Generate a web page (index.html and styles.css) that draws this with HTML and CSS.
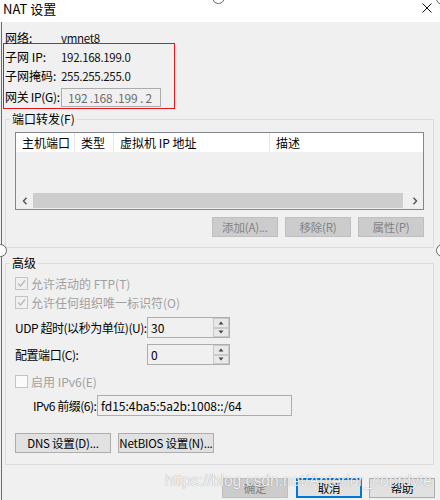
FILE: index.html
```html
<!DOCTYPE html>
<html lang="zh-CN">
<head>
<meta charset="utf-8">
<title>NAT 设置</title>
<link rel="stylesheet" href="styles.css">
</head>
<body>
<div class="window">
  <div class="titlebar">
    <span class="title">NAT 设置</span>
    <svg class="close" viewBox="0 0 10 10" width="10" height="10"><path d="M0.5 0.5 L9.5 9.5 M9.5 0.5 L0.5 9.5" stroke="#111" stroke-width="1" fill="none"/></svg>
  </div>
  <div class="main">
    <div class="info-row net"><span class="lbl">网络:</span><span class="val">vmnet8</span></div>
    <div class="redbox">
      <div class="info-row"><span class="lbl">子网 IP:</span><span class="val">192.168.199.0</span></div>
      <div class="info-row"><span class="lbl">子网掩码:</span><span class="val">255.255.255.0</span></div>
      <div class="info-row gw"><span class="lbl tight">网关 IP(G):</span><span class="ipbox">192 .168 .199 . 2</span></div>
    </div>

    <fieldset class="group pf">
      <legend>端口转发(F)</legend>
      <div class="table">
        <div class="thead">
          <div class="th c1">主机端口</div>
          <div class="th c2">类型</div>
          <div class="th c3">虚拟机 IP 地址</div>
          <div class="th c4">描述</div>
        </div>
        <div class="tbody"></div>
        <div class="hscroll">
          <div class="sbtn"><svg viewBox="0 0 6 8" width="6" height="8"><path d="M4.5 0.8 L1.5 4 L4.5 7.2" stroke="#555" stroke-width="1.4" fill="none"/></svg></div>
          <div class="thumb"></div>
          <div class="sbtn"><svg viewBox="0 0 6 8" width="6" height="8"><path d="M1.5 0.8 L4.5 4 L1.5 7.2" stroke="#555" stroke-width="1.4" fill="none"/></svg></div>
        </div>
      </div>
      <div class="btnrow">
        <div class="btn disabled">添加(A)...</div>
        <div class="btn disabled">移除(R)</div>
        <div class="btn disabled">属性(P)</div>
      </div>
    </fieldset>

    <fieldset class="group adv">
      <legend>高级</legend>
      <div class="cb-row"><span class="cb"><svg viewBox="0 0 11 11" width="11" height="11"><path d="M2 5.5 L4.5 8 L9 2.5" stroke="#b8b8b8" stroke-width="1.3" fill="none"/></svg></span>允许活动的 FTP(T)</div>
      <div class="cb-row"><span class="cb"><svg viewBox="0 0 11 11" width="11" height="11"><path d="M2 5.5 L4.5 8 L9 2.5" stroke="#b8b8b8" stroke-width="1.3" fill="none"/></svg></span>允许任何组织唯一标识符(O)</div>
      <div class="field-row udp">
        <span class="field-lbl">UDP 超时(以秒为单位)(U):</span>
        <div class="spin"><span class="txt">30</span><div class="sbtns"><div class="sb"><svg viewBox="0 0 6 4" width="6" height="4"><path d="M0.5 3.5 L3 0.5 L5.5 3.5 Z" fill="#444"/></svg></div><div class="sb"><svg viewBox="0 0 6 4" width="6" height="4"><path d="M0.5 0.5 L3 3.5 L5.5 0.5 Z" fill="#444"/></svg></div></div></div>
      </div>
      <div class="field-row port">
        <span class="field-lbl">配置端口(C):</span>
        <div class="spin"><span class="txt">0</span><div class="sbtns"><div class="sb"><svg viewBox="0 0 6 4" width="6" height="4"><path d="M0.5 3.5 L3 0.5 L5.5 3.5 Z" fill="#444"/></svg></div><div class="sb"><svg viewBox="0 0 6 4" width="6" height="4"><path d="M0.5 0.5 L3 3.5 L5.5 0.5 Z" fill="#444"/></svg></div></div></div>
      </div>
      <div class="cb-row ipv6"><span class="cb empty"></span>启用 IPv6(E)</div>
      <div class="field-row prefix">
        <span class="prefix-lbl">IPv6 前缀(6):</span>
        <span class="textbox">fd15:4ba5:5a2b:1008::/64</span>
      </div>
      <div class="btnrow2">
        <div class="btn wide">DNS 设置(D)...</div>
        <div class="btn wide">NetBIOS 设置(N)...</div>
      </div>
    </fieldset>

    <div class="footer">
      <div class="btn disabled ok">确定</div>
      <div class="btn focused cancel">取消</div>
      <div class="btn">帮助</div>
    </div>
  </div>

  <div class="watermark">https://blog.csdn.net/Anterior_coordyte</div>
  <span class="handle h-top"></span>
  <span class="handle h-tr"></span>
  <span class="handle h-left"></span>
  <span class="handle h-right"></span>
</div>
</body>
</html>
```

FILE: styles.css
```css
* { box-sizing: border-box; }
html, body { margin: 0; padding: 0; }
body {
  width: 440px;
  height: 500px;
  overflow: hidden;
  background: #f0f0f0;
  font-family: "Noto Sans CJK SC", sans-serif;
  font-size: 12px;
  color: #000;
}
.window {
  position: relative;
  width: 440px;
  height: 500px;
  overflow: hidden;
  background: #f0f0f0;
}
.titlebar {
  height: 22px;
  background: #fff;
  display: flex;
  justify-content: space-between;
  align-items: flex-start;
}
.title {
  font-size: 13px;
  line-height: 17px;
  padding-left: 3px;
}
.close { margin: 3px 8px 0 0; }

.main {
  height: 478px;
  overflow: hidden;
  background: linear-gradient(to right, #f0f0f0 1px, #6b6b6b 1px, #6b6b6b 2px, #f0f0f0 2px);
}

.info-row {
  display: flex;
  align-items: center;
  height: 16px;
  line-height: 16px;
  white-space: nowrap;
}
.net { margin: 8px 0 0 5px; }
.lbl { width: 56px; flex: none; white-space: nowrap; }
.lbl.tight { letter-spacing: -0.3px; }
.val {
  color: #111;
  font-size: 11.5px;
  letter-spacing: -0.3px;
}
.redbox {
  margin: -3px 0 0 3px;
  width: 172px;
  border: 1px solid #e3161c;
  padding: 5px 0 1px 1px;
  display: flex;
  flex-direction: column;
  gap: 3px;
}
.info-row.gw { height: 20px; }
.ipbox {
  width: 100px;
  height: 19px;
  flex: none;
  border: 1px solid #acacac;
  background: #f0f0f0;
  color: #6d6d6d;
  padding-left: 6px;
  line-height: 17px;
  letter-spacing: -0.2px;
}

fieldset.group {
  min-width: 0;
  border: 1px solid #dcdcdc;
  margin: 3px 6px 0 5px;
  padding: 6px 9px 10px 9px;
}
fieldset.group legend {
  padding: 0 2px;
  margin-left: -5px;
  line-height: 14px;
  font-size: 12px;
}
fieldset.adv {
  margin-top: 8px;
  padding: 4px 9px 11px 9px;
}

.table {
  height: 78px;
  border: 1px solid #828790;
  background: #f0f0f0;
  display: flex;
  flex-direction: column;
}
.thead {
  display: flex;
  height: 19px;
  line-height: 19px;
  background: #fff;
}
.th {
  padding-left: 6px;
  border-right: 1px solid #e5e5e5;
  flex: none;
  white-space: nowrap;
}
.c1 { width: 59px; }
.c2 { width: 39px; }
.c3 { width: 156px; }
.c4 { flex: 1; border-right: none; }
.tbody { height: 40px; }
.hscroll {
  height: 17px;
  display: flex;
  background: #f0f0f0;
}
.sbtn {
  width: 17px;
  flex: none;
  display: flex;
  align-items: center;
  justify-content: center;
}
.thumb {
  width: 371px;
  margin: 1px 3px 1px 0;
  background: #cdcdcd;
}

.btnrow {
  margin-top: 7px;
  display: flex;
  justify-content: flex-end;
  gap: 7px;
}
.btn {
  width: 66px;
  height: 20px;
  flex: none;
  border: 1px solid #adadad;
  background: #e1e1e1;
  font-size: 11.5px;
  line-height: 18px;
  text-align: center;
  white-space: nowrap;
  letter-spacing: -0.2px;
}
.btn.disabled {
  background: #cccccc;
  border-color: #bfbfbf;
  color: #838383;
}
.btn.focused {
  border: 2px solid #0078d7;
  line-height: 16px;
}

.cb-row {
  height: 19px;
  display: flex;
  align-items: center;
  color: #a0a0a0;
  white-space: nowrap;
}
.cb {
  width: 13px;
  height: 13px;
  flex: none;
  border: 1px solid #c4c4c4;
  background: #f0f0f0;
  margin-right: 3px;
  display: flex;
  align-items: center;
  justify-content: center;
}
.cb.empty { background: #fafafa; }
.cb-row.ipv6 { margin-top: 7px; }

.field-row {
  display: flex;
  align-items: center;
  height: 21px;
}
.field-row.udp { margin-top: 5px; }
.field-row.port { margin-top: 6px; }
.field-row.prefix { margin-top: 4px; }
.field-lbl {
  width: 132px;
  flex: none;
  white-space: nowrap;
  letter-spacing: -0.45px;
}
.spin {
  width: 83px;
  height: 21px;
  flex: none;
  border: 1px solid #adadad;
  background: #f0f0f0;
  display: flex;
}
.spin .txt {
  flex: 1;
  padding-left: 3px;
  line-height: 19px;
}
.sbtns {
  width: 16px;
  display: flex;
  flex-direction: column;
}
.sb {
  flex: 1;
  border: 1px solid #cacaca;
  background: #e8e8e8;
  display: flex;
  align-items: center;
  justify-content: center;
}
.prefix-lbl {
  margin-left: 18px;
  width: 64px;
  flex: none;
  white-space: nowrap;
  letter-spacing: -0.5px;
}
.textbox {
  width: 195px;
  height: 21px;
  flex: none;
  border: 1px solid #adadad;
  background: #f0f0f0;
  padding-left: 3px;
  line-height: 19px;
  white-space: nowrap;
}
.btnrow2 {
  margin-top: 17px;
  display: flex;
  gap: 7px;
}
.btn.wide { width: 96px; }

.footer {
  margin-top: 13px;
  padding-right: 5px;
  display: flex;
  justify-content: flex-end;
}
.footer .ok { margin-right: 8px; }
.footer .cancel { margin-right: 7px; }

.watermark {
  position: absolute;
  left: 165px;
  top: 472px;
  font-family: "Liberation Sans", sans-serif;
  font-size: 15.6px;
  line-height: 18px;
  color: rgba(255, 255, 255, 0.88);
  text-shadow: 0 0 1px rgba(0, 0, 0, 0.4);
  white-space: nowrap;
}
.handle {
  position: absolute;
  width: 13px;
  height: 13px;
  border-radius: 50%;
  background: #fff;
  border: 1px solid #666;
}
.h-top { left: 212px; top: -9px; }
.h-tr { left: 436px; top: -8px; }
.h-left { left: -6px; top: 244px; }
.h-right { left: 436px; top: 244px; }
```
